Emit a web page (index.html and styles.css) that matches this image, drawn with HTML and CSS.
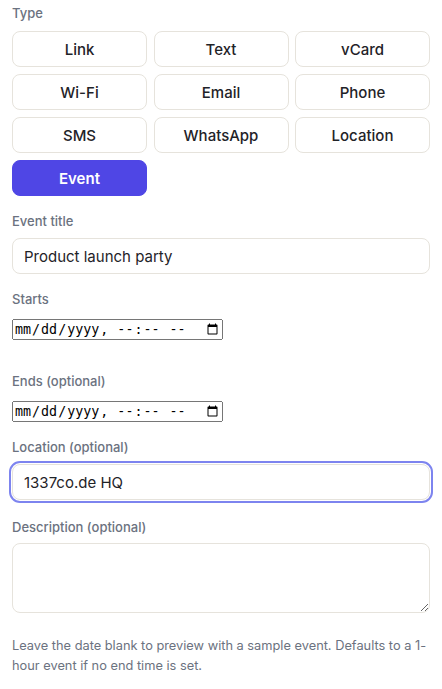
FILE: index.html
```
<!DOCTYPE html>
<html lang="en">
<head>
    <meta charset="UTF-8">
    <meta name="viewport" content="width=device-width, initial-scale=1.0">
    <title>QR type - Event</title>
    <link rel="stylesheet" href="styles.css">
</head>
<body>
    <div class="panel">
        <div class="field-label type-label">Type</div>

        <div class="type-grid">
            <button class="type-btn">Link</button>
            <button class="type-btn">Text</button>
            <button class="type-btn">vCard</button>
            <button class="type-btn">Wi-Fi</button>
            <button class="type-btn">Email</button>
            <button class="type-btn">Phone</button>
            <button class="type-btn">SMS</button>
            <button class="type-btn">WhatsApp</button>
            <button class="type-btn">Location</button>
            <button class="type-btn active">Event</button>
        </div>

        <div class="field">
            <label class="field-label">Event title</label>
            <input class="text-input" type="text" value="Product launch party">
        </div>

        <div class="field date-field starts">
            <label class="field-label">Starts</label>
            <div><input class="date-input" type="datetime-local"></div>
        </div>

        <div class="field date-field">
            <label class="field-label">Ends (optional)</label>
            <div><input class="date-input" type="datetime-local"></div>
        </div>

        <div class="field">
            <label class="field-label">Location (optional)</label>
            <input class="text-input focused" type="text" value="1337co.de HQ">
        </div>

        <div class="field desc">
            <label class="field-label">Description (optional)</label>
            <textarea class="text-area"></textarea>
        </div>

        <p class="hint">Leave the date blank to preview with a sample event. Defaults to a 1-hour event if no end time is set.</p>
    </div>
</body>
</html>
```

FILE: styles.css
```
*{
    box-sizing: border-box;
    margin: 0;
    padding: 0;
}
body{
    background-color: #ffffff;
    font-family: Inter, "Noto Sans", sans-serif;
    color: #1f2328;
}
.panel{
    padding: 4px 12px 0 12px;
}
.field-label{
    display: block;
    font-size: 13px;
    line-height: 18px;
    font-weight: 500;
    color: #6b7280;
}
.type-label{
    margin-bottom: 9px;
}
.type-grid{
    display: grid;
    grid-template-columns: repeat(3, 1fr);
    gap: 7px 6.5px;
}
.type-btn{
    height: 36px;
    border: 1px solid #e6e3dc;
    border-radius: 8px;
    background-color: #ffffff;
    font-family: Inter, "Noto Sans", sans-serif;
    font-size: 15px;
    font-weight: 500;
    color: #1f2328;
}
.type-btn.active{
    background-color: #4f46e5;
    border-color: #4f46e5;
    color: #ffffff;
    font-weight: 600;
}
.field{
    margin-top: 16px;
}
.field .field-label{
    margin-bottom: 8px;
}
.text-input{
    display: block;
    width: 100%;
    height: 36px;
    padding: 0 11px;
    border: 1px solid #e6e3dc;
    border-radius: 8px;
    font-family: Inter, "Noto Sans", sans-serif;
    font-size: 15px;
    color: #1f2328;
    outline: none;
}
.text-input.focused{
    outline: 2px solid #7d84ef;
    outline-offset: 1px;
}
.date-field .field-label{
    margin-bottom: 11px;
}
.date-input{
    display: block;
    width: 211px;
    height: 21px;
}
.starts{
    padding-bottom: 16px;
}
.desc{
    margin-top: 18px;
}
.desc .field-label{
    margin-bottom: 7px;
}
.text-area{
    display: block;
    width: 100%;
    height: 70px;
    border: 1px solid #e6e3dc;
    border-radius: 8px;
    font-family: Inter, "Noto Sans", sans-serif;
    outline: none;
}
.hint{
    margin-top: 23px;
    font-size: 12.8px;
    line-height: 20px;
    color: #6b7280;
}
```
